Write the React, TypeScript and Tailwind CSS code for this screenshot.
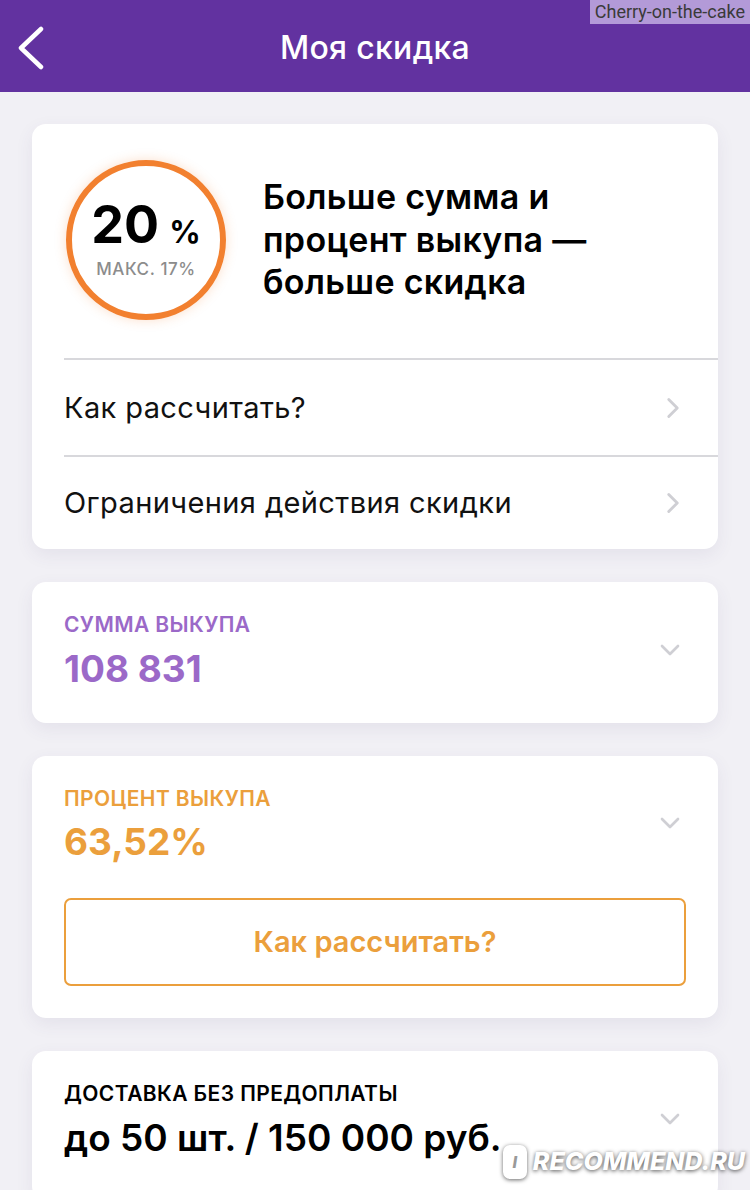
import { ChevronRight, ChevronDown } from "lucide-react";

const font = { fontFamily: "Inter, 'Noto Sans', sans-serif" };

function Card({ children, className = "" }: { children: React.ReactNode; className?: string }) {
    return (
        <div className={`rounded-[14px] bg-white shadow-[0_6px_18px_rgba(80,60,120,0.08)] ${className}`}>
            {children}
        </div>
    );
}

function Stat({ label, value, color, children }: { label: string; value: string; color: string; children?: React.ReactNode }) {
    return (
        <Card className="pl-8 pr-8 pt-[27px] pb-[32px]">
            <div className="flex items-center justify-between">
                <div>
                    <div className={`text-[21px] font-semibold uppercase tracking-[0.4px] ${color}`}>{label}</div>
                    <div className={`mt-[6px] text-[37px] font-bold leading-[44px] ${color}`}>{value}</div>
                </div>
                <ChevronDown className="text-[#cfcfd4]" size={32} strokeWidth={2} />
            </div>
            {children}
        </Card>
    );
}

export default function App() {
    return (
        <div className="min-h-screen bg-[#f1f0f5]" style={font}>
            {/* Header */}
            <div className="relative flex h-[92px] items-center justify-center bg-[#6232a0]">
                <svg className="absolute left-[14px] top-[26px]" width="32" height="44" viewBox="0 0 32 44" fill="none">
                    <path d="M27 3 L7 22 L27 41" stroke="white" strokeWidth="4.5" strokeLinecap="round" strokeLinejoin="round" />
                </svg>
                <h1 className="mt-[4px] text-[32px] font-medium tracking-[0.3px] text-white">Моя скидка</h1>
                <div className="absolute right-0 top-0 bg-[#b39ad8] px-[5px] text-[18px] leading-[24px] text-[#3a3a3a]" style={{ fontFamily: "Roboto, sans-serif" }}>
                    Cherry-on-the-cake
                </div>
            </div>

            <div className="flex flex-col gap-[33px] px-[32px] pt-[32px]">
                {/* Discount card */}
                <Card className="pl-8">
                    <div className="flex items-center gap-[37px] pt-[36px] pb-[38px]">
                        <div className="ml-[2px] flex h-[160px] w-[160px] shrink-0 flex-col items-center justify-center rounded-full border-[6px] border-[#f2802f] shadow-[0_0_12px_rgba(242,128,47,0.25)]">
                            <div className="flex items-baseline">
                                <span className="text-[52px] font-bold leading-[54px] text-black">20</span>
                                <span className="ml-[10px] text-[31px] font-bold text-black">%</span>
                            </div>
                            <span className="mt-[2px] text-[17px] font-medium tracking-[0.6px] text-[#8c8c8c]">МАКС. 17%</span>
                        </div>
                        <p className="text-[34px] font-semibold leading-[42.5px] tracking-[0.3px] text-black">
                            Больше сумма и<br />процент выкупа —<br />больше скидка
                        </p>
                    </div>
                    <div className="flex h-[97px] items-center justify-between border-t-2 border-[#d8d8dc] pr-[28px]">
                        <span className="text-[29px] tracking-[0.4px] text-[#111]">Как рассчитать?</span>
                        <ChevronRight className="text-[#cfcfd4]" size={34} strokeWidth={2} />
                    </div>
                    <div className="flex h-[94px] items-center justify-between border-t-2 border-[#d8d8dc] pr-[28px]">
                        <span className="text-[29px] tracking-[0.4px] text-[#111]">Ограничения действия скидки</span>
                        <ChevronRight className="text-[#cfcfd4]" size={34} strokeWidth={2} />
                    </div>
                </Card>

                <Stat label="Сумма выкупа" value="108 831" color="text-[#9b69c8]" />

                <Stat label="Процент выкупа" value="63,52%" color="text-[#eb9f3c]">
                    <button className="mt-[34px] flex h-[88px] w-full items-center justify-center rounded-[7px] border-2 border-[#eb9f3c] text-[29px] font-semibold text-[#eb9f3c]">
                        Как рассчитать?
                    </button>
                </Stat>

                <Card className="relative pl-8 pr-8 pt-[27px] pb-[40px]">
                    <div className="flex items-center justify-between">
                        <div>
                            <div className="text-[21px] font-semibold uppercase tracking-[0.4px] text-black">Доставка без предоплаты</div>
                            <div className="mt-[6px] text-[37px] font-semibold leading-[44px] text-black">до 50 шт. / 150 000 руб.</div>
                        </div>
                        <ChevronDown className="text-[#cfcfd4]" size={32} strokeWidth={2} />
                    </div>
                    <div className="absolute right-[-27px] top-[92px] flex items-center gap-[6px] text-[25px] font-extrabold italic text-white [text-shadow:0_1px_4px_rgba(0,0,0,0.7)]">
                        <span className="flex h-[34px] w-[24px] items-center justify-center rounded-[7px] bg-white text-[16px] text-[#999] shadow-[0_1px_4px_rgba(0,0,0,0.6)] [text-shadow:none]">I</span>
                        RECOMMEND.RU
                    </div>
                </Card>
            </div>
        </div>
    );
}
